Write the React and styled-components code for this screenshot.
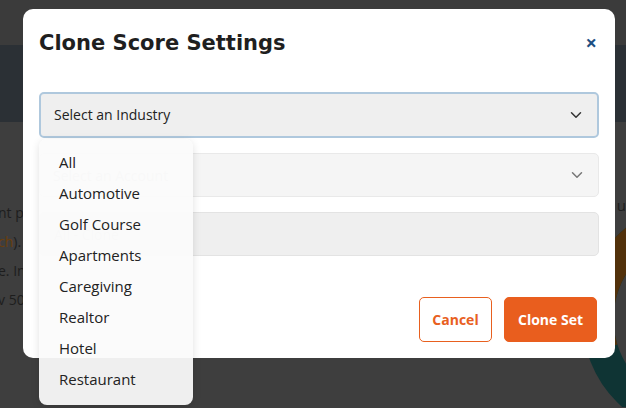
import styled, { createGlobalStyle } from 'styled-components';
import { ChevronDown } from 'lucide-react';

const industries = [
  'All',
  'Automotive',
  'Golf Course',
  'Apartments',
  'Caregiving',
  'Realtor',
  'Hotel',
  'Restaurant',
];

const GlobalStyle = createGlobalStyle`
  html, body {
    margin: 0;
    padding: 0;
    width: 626px;
    height: 408px;
    overflow: hidden;
    background: #3e3e3e;
    font-family: "Open Sans", "Liberation Sans", sans-serif;
  }
  * { box-sizing: border-box; }
`;

function App() {
  return (
    <>
      <GlobalStyle />
      <Page>
        <TopBar />
        <NavBar />
        <Content>
          <Blurb>
            <Line>nt p</Line>
            <Line>
              <Link>ch</Link>).
            </Line>
            <Line>e. In</Line>
            <Line>v 50</Line>
          </Blurb>
          <Side>
            <SideLabel>ur</SideLabel>
            {/* piece of a donut chart peeking out from behind the modal */}
            <Donut width="40" height="192" viewBox="586 216 40 192">
              <circle cx="700" cy="320" r="102" fill="none" stroke="#0f3434" strokeWidth="31" />
              <path d="M 700 218 A 102 102 0 0 0 602.5 350" fill="none" stroke="#52310b" strokeWidth="31" />
            </Donut>
          </Side>
        </Content>
      </Page>

      <Modal>
        <Header>
          <Title>Clone Score Settings</Title>
          <Close>×</Close>
        </Header>

        <Form>
          <Select $active>
            <SelectText>Select an Industry</SelectText>
            <ChevronDown size={18} strokeWidth={2} color="#333" />
          </Select>
          <Select>
            <Placeholder>Select an Account</Placeholder>
            <ChevronDown size={18} strokeWidth={2} color="#777" />
          </Select>
          <Input>
            <Placeholder>All - Clone</Placeholder>
          </Input>
        </Form>

        <Actions>
          <OutlineButton>Cancel</OutlineButton>
          <SolidButton>Clone Set</SolidButton>
        </Actions>

        <Menu>
          {industries.map((name) => (
            <MenuItem key={name}>{name}</MenuItem>
          ))}
        </Menu>
      </Modal>
    </>
  );
}

export default App;

const Page = styled.div`
  width: 626px;
  height: 408px;
  display: flex;
  flex-direction: column;
  background: #3e3e3e;
  overflow: hidden;
`;

const TopBar = styled.div`
  height: 45px;
  background: #3b3b3b;
`;

const NavBar = styled.div`
  height: 77px;
  background: #2b3035;
`;

const Content = styled.div`
  flex: 1;
  display: flex;
  justify-content: space-between;
  padding-top: 81px;
`;

const Blurb = styled.div`
  display: flex;
  flex-direction: column;
  gap: 10px;
  margin-left: -2px;
`;

const Line = styled.div`
  font-size: 14px;
  line-height: 19px;
  color: #1d1d1d;
`;

const Link = styled.span`
  color: #6b3f0c;
`;

const Side = styled.div`
  display: flex;
  flex-direction: column;
  align-items: flex-end;
  margin-top: -8px;
`;

const SideLabel = styled.div`
  font-size: 15px;
  line-height: 20px;
  color: #1d1d1d;
  margin-right: -6px;
`;

const Donut = styled.svg`
  display: block;
`;

const Modal = styled.div`
  position: absolute;
  left: 23px;
  top: 9px;
  width: 592px;
  height: 349px;
  padding: 16px;
  background: #fff;
  border-radius: 10px;
  display: flex;
  flex-direction: column;
`;

const Header = styled.div`
  display: flex;
  align-items: center;
  justify-content: space-between;
  height: 36px;
`;

const Title = styled.h2`
  margin: 0;
  font-family: "DejaVu Sans", "Open Sans", sans-serif;
  font-size: 21px;
  font-weight: 700;
  color: #1f1f1f;
`;

const Close = styled.span`
  font-family: "Open Sans", sans-serif;
  font-size: 20px;
  font-weight: 700;
  color: #1d4f82;
  margin-right: 2px;
  line-height: 1;
`;

const Form = styled.div`
  display: flex;
  flex-direction: column;
  gap: 15px;
  margin-top: 31px;
`;

const Select = styled.div`
  height: ${(p) => (p.$active ? '46px' : '44px')};
  display: flex;
  align-items: center;
  justify-content: space-between;
  padding: 0 12px 0 13px;
  border-radius: 5px;
  background: ${(p) => (p.$active ? '#efefef' : '#f5f5f5')};
  border: ${(p) => (p.$active ? '2px solid #afc8dd' : '1px solid #e9e9e9')};
`;

const Input = styled.div`
  height: 44px;
  display: flex;
  align-items: center;
  padding: 0 14px;
  border-radius: 5px;
  background: #efefef;
  border: 1px solid #e3e3e3;
`;

const SelectText = styled.span`
  font-size: 14px;
  color: #222;
  margin-top: -2px;
`;

const Placeholder = styled.span`
  font-size: 14px;
  color: #c9c9c9;
`;

const Actions = styled.div`
  margin-top: auto;
  display: flex;
  justify-content: flex-end;
  gap: 12px;
  padding-right: 2px;
`;

const ButtonBase = styled.button`
  height: 45px;
  padding: 0 12px;
  border-radius: 5px;
  font-family: "Open Sans", sans-serif;
  font-size: 14px;
  font-weight: 700;
  cursor: pointer;
`;

const OutlineButton = styled(ButtonBase)`
  width: 73px;
  background: #fff;
  color: #e8601f;
  border: 1.5px solid #e8601f;
`;

const SolidButton = styled(ButtonBase)`
  width: 93px;
  background: #e95e1e;
  color: #fff;
  border: 1px solid #e95e1e;
`;

const Menu = styled.div`
  position: absolute;
  left: 16px;
  top: 130px;
  width: 154px;
  padding: 7px 0 11px;
  border-radius: 8px;
  background: rgba(251, 251, 251, 0.94);
  box-shadow: 0 2px 8px rgba(0, 0, 0, 0.12);
  display: flex;
  flex-direction: column;
`;

const MenuItem = styled.div`
  height: 31px;
  display: flex;
  align-items: center;
  padding-left: 20px;
  font-size: 15px;
  color: #222;
`;
